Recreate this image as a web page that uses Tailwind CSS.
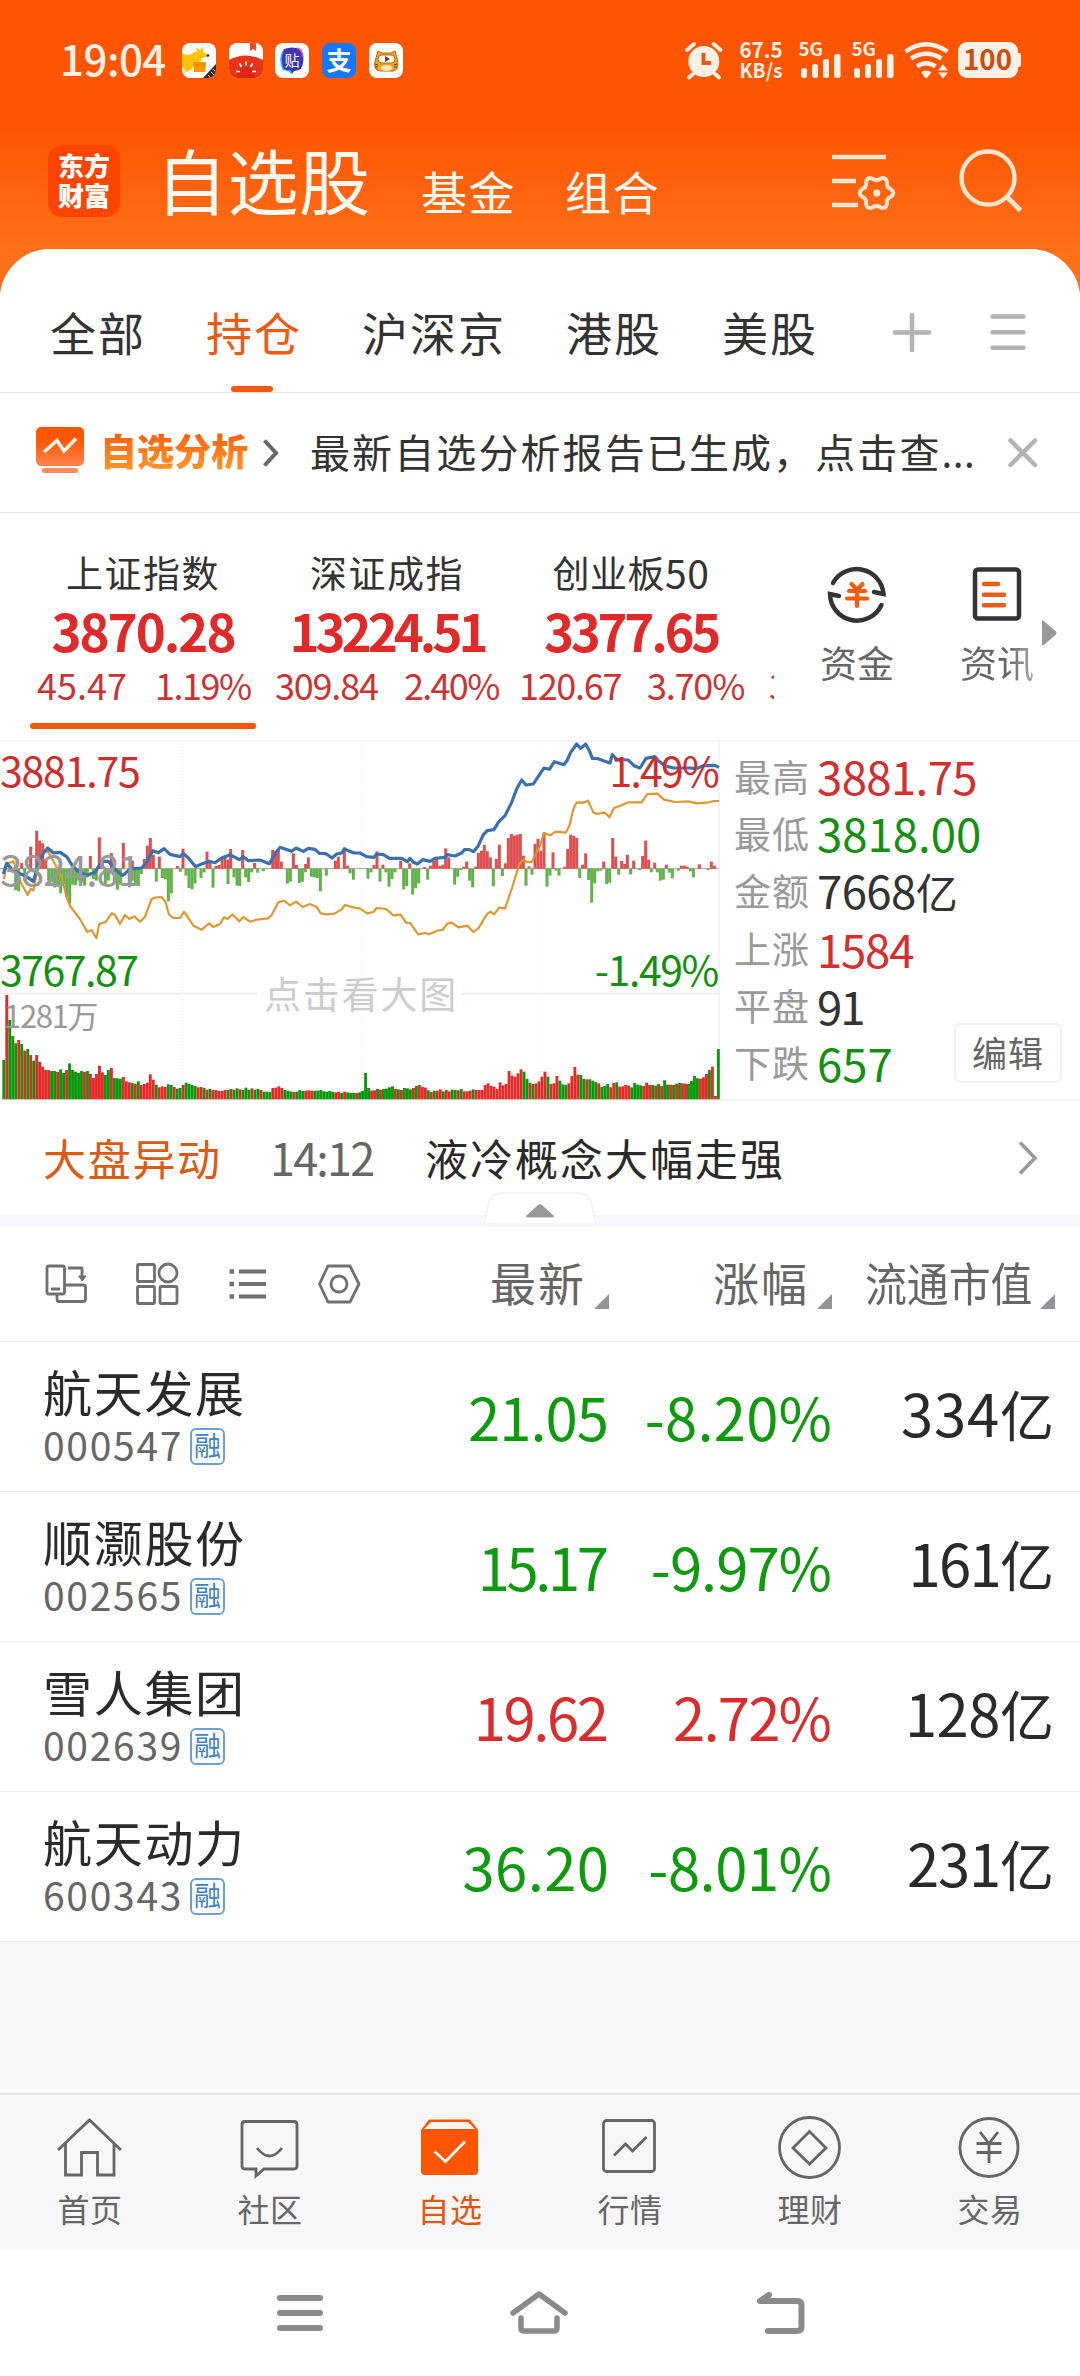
<!DOCTYPE html>
<html lang="zh-CN">
<head>
<meta charset="utf-8">
<title>自选股</title>
<script src="https://cdn.jsdelivr.net/npm/@tailwindcss/browser@4"></script>
</head>
<body class="w-[1080px] h-[2376px] overflow-hidden bg-white font-['Noto_Sans_CJK_SC',sans-serif] leading-none text-[#333] whitespace-nowrap">
<div class="flex flex-col w-[1080px] h-[2376px]">

<header class="h-[310px] shrink-0 bg-linear-to-b from-[#ff5500] from-[42%] to-[#ff7019] to-[82%]">
  <!-- status bar -->
  <div class="h-[120px] flex items-center pl-[60px] text-[#fff0e6]">
    <div class="w-[122px] h-[46px] text-[42px] leading-[42px] font-medium tracking-[-0.5px]">19:04</div>
    <div class="flex gap-[12.7px]">
      <svg width="34" height="35" viewBox="0 0 34 35"><clipPath id="a"><rect width="34" height="35" rx="8"/></clipPath><g clip-path="url(#a)"><rect width="34" height="35" fill="#fff"/><path d="M0 10Q6 14 11 10L15 8L14 4L18 7L21 4V9L27 12L25 14L20 15L18 20L13 21L9 27L3 29L1 34L3 27L0 24Z" fill="#ffc40c"/><path d="M11 19H24L23 29H12Z" fill="#ff9500"/><path d="M11 19L14 22H24" fill="none" stroke="#e87c00"/><circle cx="26" cy="12.5" r="1.3" fill="#222"/><path d="M34 21V35H21Z" fill="#3a2a20"/><path d="M26 32l2 2M29 29l3 3M31 26l2 2" stroke="#d6c2ae" stroke-width="1"/></g></svg>
      <svg width="34" height="35" viewBox="0 0 34 35"><clipPath id="b"><rect width="34" height="35" rx="8"/></clipPath><g clip-path="url(#b)"><rect width="34" height="35" fill="#fff"/><path d="M21 0H27V8L24 6L21 8Z" fill="#f04a23"/><path d="M0 17Q16 8 34 17V35H0Z" fill="#ea3319"/><circle cx="17" cy="32" r="9" fill="#d91e0a" opacity=".6"/><path d="M17 18.500V22.500M10.500 20.500L12.500 24M23.500 20.500L21.500 24M7 28.500H11M23 28.500H27" stroke="#fff" stroke-width="1.700"/></g></svg>
      <svg width="34" height="35" viewBox="0 0 34 35"><rect width="34" height="35" rx="8" fill="#fff"/><path d="M9 6Q17 3 26 6Q31 16 26 26Q21 28 19 28L17 31L15 28Q11 28 8 26Q3 16 9 6Z" fill="#3f35b8"/><path d="M8 8Q4 16 8 26Q11 28 15 28L17 31" stroke="#2abff5" stroke-width="1.500" fill="none"/><path d="M22 5Q27 6 28 14" stroke="#ff5d93" stroke-width="1.500" fill="none"/><text x="17" y="22.500" font-size="15" text-anchor="middle" fill="#fff">贴</text></svg>
      <svg width="34" height="35" viewBox="0 0 34 35"><rect width="34" height="35" rx="8" fill="#1677ff"/><text x="17" y="27" font-size="25" font-weight="700" text-anchor="middle" fill="#fff">支</text></svg>
      <svg width="34" height="35" viewBox="0 0 34 35"><rect width="34" height="35" rx="8" fill="#fff"/><path d="M9 8L13 10H22L26 8L28 15Q31 27 24 28H11Q3 27 7 15Z" fill="#f6a31c" stroke="#b66a10"/><rect x="9" y="12" width="17" height="8" rx="4" fill="#fff" stroke="#b66a10"/><path d="M16 13L21 16L16 19Z" fill="#8d2f20"/><path d="M6 21l3 1M6 24l3 0M28 21l-3 1M28 24l-3 0" stroke="#6b3410"/><ellipse cx="17.500" cy="25" rx="6" ry="3" fill="#ffe5b0"/></svg>
    </div>
    <svg class="ml-[281px]" width="340" height="60" viewBox="683 30 340 60" fill="#fff0e6">
      <circle cx="702.800" cy="61.500" r="15.500"/><path d="M686 50L693 44M719.500 50L712.500 44M692 74L688 77.500M714 74L718 77.500" stroke="#fff0e6" stroke-width="4" stroke-linecap="round"/><path d="M702.500 53V63H710" fill="none" stroke="#e55a1c" stroke-width="4"/>
      <text x="738.500" y="58" font-size="21.500" font-weight="700" textLength="43" lengthAdjust="spacingAndGlyphs">67.5</text>
      <text x="738.500" y="77.500" font-size="19.500" font-weight="700" textLength="43" lengthAdjust="spacingAndGlyphs">KB/s</text>
      <g id="sig"><text x="797.500" y="56" font-size="18" font-weight="700" textLength="24.500" lengthAdjust="spacingAndGlyphs">5G</text><rect x="800" y="68" width="6" height="10" rx="2.500"/><rect x="811" y="64" width="6" height="14" rx="2.500"/><rect x="822" y="59" width="6" height="19" rx="2.500"/><rect x="833" y="54" width="6.500" height="24" rx="2.500"/></g>
      <use href="#sig" x="53"/>
      <g fill="none" stroke="#fff0e6" stroke-width="4.500"><path d="M904.500 51.500Q925 37 946.500 51.500"/><path d="M910 58.500Q925 49 940.500 58.500"/><path d="M916 66.500Q925 60 934.500 66.500"/></g>
      <path d="M920 72Q925 69 930.500 72L926.500 77.500Q925 79 923.500 77.500ZM937 70.500L942 64L947 70.500ZM937 72.500L942 78.500L947 72.500Z"/>
      <rect x="957" y="42" width="60" height="36" rx="9"/><rect x="1014" y="53" width="6" height="14" rx="2"/>
      <text x="962" y="70" font-size="28" font-weight="700" fill="#c94e12" textLength="49" lengthAdjust="spacingAndGlyphs">100</text>
    </svg>
  </div>
  <!-- title bar -->
  <div class="h-[125px] flex items-start pl-12 text-[#fff8f0]">
    <div class="mt-[25px] w-[72px] h-[72px] rounded-[14px] bg-[#ff4400] flex flex-col items-center pt-[5px] text-[26px] leading-[30px] font-black text-white"><span>东方</span><span>财富</span></div>
    <div class="ml-[36px] mt-[23px] w-[265px] text-[71px] leading-[70px] tracking-[0.5px]">自选股</div>
    <div class="mt-[47px] w-[144px] text-[46px] leading-[46px] tracking-[1.5px]">基金</div>
    <div class="mt-[47px] w-[265px] text-[46px] leading-[46px] tracking-[1.5px]">组合</div>
    <svg class="mt-[31px]" width="66" height="64" viewBox="829 151 66 64" fill="none" stroke="#ffe5cf" stroke-width="4.500"><path d="M831 157H885M831 181H855M831 205H857"/><path transform="translate(875.500 193)" d="M14.200 -3.800Q19.500 0 14.200 3.800Q10 5.750 10.400 10.400Q9.750 16.900 3.800 14.200Q0 11.500 -3.800 14.200Q-9.750 16.900 -10.400 10.400Q-10 5.750 -14.200 3.800Q-19.500 0 -14.200 -3.800Q-10 -5.750 -10.400 -10.400Q-9.750 -16.900 -3.800 -14.200Q0 -11.500 3.800 -14.200Q9.750 -16.900 10.400 -10.400Q10 -5.750 14.200 -3.800Z" stroke-width="4"/><circle cx="875.700" cy="193" r="3.700" fill="#ffe5cf" stroke="none"/></svg>
    <svg class="ml-[61px] mt-[27px]" width="68" height="68" viewBox="956 147 68 68" fill="none" stroke="#ffe5cf" stroke-width="4.500"><circle cx="987" cy="178" r="26.500"/><path d="M1006 197L1019.500 210.500" stroke-width="5"/></svg>
  </div>
</header>

<main class="relative -mt-[61px] shrink-0 h-[1844px] bg-[#f7f8fa] rounded-t-[50px]">
  <section class="bg-white rounded-t-[50px]">
    <!-- group tabs -->
    <div class="h-[144px] border-b border-[#e3e3e3] flex pl-[50px] pt-[59px] text-[46px] leading-[46px] tracking-[2px]">
      <div class="w-[156px]">全部</div>
      <div class="w-[156px] relative text-[#ee5a12]">持仓<div class="absolute left-[25px] top-[78px] w-[42px] h-[6px] rounded-full bg-[#f5590e]"></div></div>
      <div class="w-[204px]">沪深京</div>
      <div class="w-[156px]">港股</div>
      <div class="w-[168px]">美股</div>
      <svg class="mt-[3px]" width="144" height="44" viewBox="890 311 144 44" stroke="#b3b3b3" stroke-width="4.500" stroke-linecap="round"><path d="M895 332.500H929M912 315V350M992.500 316.500H1023.500M992.500 332.200H1023.500M992.500 347.800H1023.500"/></svg>
    </div>
    <!-- analysis notice -->
    <div class="h-[120px] border-b border-[#e3e3e3] flex items-center pl-9">
      <svg class="-mt-[5px]" width="48" height="47" viewBox="36 427 48 47"><defs><linearGradient id="g" x2="0" y2="1"><stop offset=".3" stop-color="#ff5500"/><stop offset="1" stop-color="#ff8350"/></linearGradient></defs><rect x="36" y="427" width="48" height="39" rx="5" fill="url(#g)"/><rect x="42" y="468" width="36" height="5" rx="2.500" fill="#f98c5c"/><path d="M44 452L57 440.500L64 451L76 438.500" fill="none" stroke="#fff3e8" stroke-width="3.500"/></svg>
      <div class="ml-[16px] w-[162px] h-[42px] text-[37px] leading-[37px] font-black bg-linear-to-b from-[#ff5c08] to-[#ff9a2a] bg-clip-text text-transparent">自选分析</div>
      <svg width="18" height="30" viewBox="262 438 18 30" fill="none" stroke="#666" stroke-width="4"><path d="M264.500 440.500L276 453L264.500 465.500"/></svg>
      <div class="ml-[30px] w-[698px] h-[44px] text-[40px] leading-[40px] tracking-[2.100px]">最新自选分析报告已生成，点击查<span class="font-['Noto_Sans'] tracking-[0.500px]">...</span></div>
      <svg width="30" height="30" viewBox="1009 439 30 30" stroke="#b3b3b3" stroke-width="4.500" stroke-linecap="round"><path d="M1011.500 441.500L1036 466M1036 441.500L1011.500 466"/></svg>
    </div>
    <!-- indices -->
    <div class="h-[229px] border-b-2 border-[#f4f4f4] flex">
      <div class="w-[774px] flex overflow-hidden">
        <div class="ml-[30px] w-[226px] shrink-0 flex flex-col items-center">
          <div class="mt-[41px] text-[37px] leading-[37px] tracking-[1.500px]">上证指数</div>
          <div class="mt-[14px] text-[51px] leading-[51px] font-bold tracking-[-2px] text-[#e02a2a]">3870.28</div>
          <div class="mt-[10px] w-full h-[38px] flex pl-[7px] text-[36px] leading-[36px] text-[#cc3232]"><span class="w-[118px]">45.47</span><span class="tracking-[-1.500px]">1.19%</span></div>
          <div class="mt-[19px] w-[226px] h-[6px] rounded-full bg-[#f2590f]"></div>
        </div>
        <div class="w-[244px] ml-[9px] shrink-0 flex flex-col items-center">
          <div class="mt-[41px] text-[37px] leading-[37px] tracking-[1.500px]">深证成指</div>
          <div class="mt-[14px] text-[51px] leading-[51px] font-bold tracking-[-4px] text-[#e02a2a]">13224.51</div>
          <div class="mt-[10px] w-full flex pl-[10px] text-[36px] leading-[36px] text-[#cc3232]"><span class="w-[129px] tracking-[-1.200px]">309.84</span><span class="tracking-[-1.700px]">2.40%</span></div>
        </div>
        <div class="w-[244px] shrink-0 flex flex-col items-center">
          <div class="mt-[41px] flex items-start text-[37px] leading-[37px] tracking-[0.500px]">创业板<span class="text-[39px]">50</span></div>
          <div class="mt-[14px] text-[51px] leading-[51px] font-bold tracking-[-3.300px] text-[#e02a2a]">3377.65</div>
          <div class="mt-[10px] w-full flex pl-[10px] text-[36px] leading-[36px] text-[#cc3232]"><span class="w-[128px] tracking-[-1.300px]">120.67</span><span class="tracking-[-1.200px]">3.70%</span></div>
        </div>
        <div class="w-[40px] shrink-0 ml-[16px] mt-[153px] text-[36px] leading-[36px] text-[#cc3232]">3</div>
      </div>
      <div class="ml-[45px] w-[76px] flex flex-col items-center text-[37px] leading-[37px] text-[#666]">
        <svg class="mt-[50px] mb-[19px]" width="60" height="62" viewBox="826 563 60 62" fill="none" stroke="#333" stroke-width="4.500" stroke-linecap="round"><path d="M832 583A27 27 0 0 1 882.500 594L873 592"/><path d="M880.500 605A27 27 0 0 1 829 594L838 596"/><path d="M850.500 584L856 590L861.500 584M856 591V606M848 591H864M846 598.500H866" stroke="#ff5a0a" stroke-width="4.200"/></svg>
        资金</div>
      <div class="ml-[64px] w-[76px] flex flex-col items-center text-[37px] leading-[37px] text-[#666]">
        <svg class="mt-[52px] mb-[19px]" width="52" height="60" viewBox="971 565 52 60" fill="none" stroke="#333" stroke-width="4.500" stroke-linecap="round"><rect x="975" y="569.500" width="44" height="49" rx="3"/><path d="M984 584H998M984 594.700H1004M984 605.300H1004" stroke="#ea5c14"/></svg>
        <span class="bg-linear-to-r from-[#666] from-[65%] to-[#aaa] bg-clip-text text-transparent">资讯</span></div>
      <svg class="ml-[7px] mt-[107px]" width="16" height="26" viewBox="0 0 16 26"><path d="M0 1Q1 0 3 2L14 11.500Q15 13 14 14.500L3 24Q1 26 0 25Z" fill="#999"/></svg>
    </div>
    <!-- intraday chart and statistics -->
    <div class="h-[359px] flex border-b-2 border-[#f4f4f4]">
      <div class="relative w-[720px] h-[358px] border-r-2 border-[#f4f4f4]">
        <svg class="absolute left-0 -top-px" width="720" height="359" viewBox="0 21 2160 1077">
          <path d="M549 30V1090M1086 30V1090M1623 30V1090" stroke="#ececec" stroke-width="3" stroke-dasharray="3 6"/>
          <path d="M0 779H772M1382 779H2160" stroke="#eeeeee" stroke-width="5"/>
          <path d="M0 404H2155" stroke="#8f8a7a" stroke-width="2.500"/>
          <g id="flow"></g><g id="vol"></g>
          <g fill="none" stroke-linejoin="round"><polyline id="orange" stroke="#e0962c" stroke-width="6.500"/><polyline id="blue" stroke="#3b70b0" stroke-width="9.500"/></g>
        </svg>
        <div class="absolute left-0 top-[7px] text-[41px] leading-[41px] tracking-[-1.200px] text-[#d02c2c]">3881.75</div>
        <div class="absolute left-0 top-[106px] text-[41px] leading-[41px] tracking-[-1.200px] text-[#999]">3824.81</div>
        <div class="absolute left-0 top-[206px] text-[41px] leading-[41px] tracking-[-1.500px] text-[#12900f]">3767.87</div>
        <div class="absolute left-[4px] top-[257px] text-[31px] leading-[31px] tracking-[-1.300px] text-[#999]">1281万</div>
        <div class="absolute right-0 top-[7px] text-[41px] leading-[41px] tracking-[-1.800px] text-[#d02c2c]">1.49%</div>
        <div class="absolute right-0 top-[206px] text-[41px] leading-[41px] tracking-[-1.400px] text-[#12900f]">-1.49%</div>
        <div class="absolute left-[264px] top-[233px] text-[37px] leading-[37px] tracking-[1.800px] text-[#ccc]">点击看大图</div>
      </div>
      <div class="w-[360px] flex pl-[14px] pt-[6px] text-[37px] tracking-[1px]">
        <div class="w-[83px] flex flex-col text-[#999] leading-[57.200px]"><span>最高</span><span>最低</span><span>金额</span><span>上涨</span><span>平盘</span><span>下跌</span></div>
        <div class="-mt-px w-[137px] flex flex-col text-[45.500px] leading-[57.200px] tracking-[-0.600px]"><span class="text-[#d42e2e]">3881.75</span><span class="text-[#12900f] tracking-[0px]">3818.00</span><span>7668<span class="text-[42px]">亿</span></span><span class="text-[#d42e2e] tracking-[-1.200px]">1584</span><span class="tracking-[-2px]">91</span><span class="text-[#12900f] tracking-[0px]">657</span></div>
        <div class="mt-[275px] w-[108px] h-[60px] rounded-[7px] border-2 border-[#f0f0f0] flex justify-center pt-[9px] text-[35px] leading-[36px] text-[#666]">编辑</div>
      </div>
    </div>
    <!-- market alert -->
    <div class="h-[114px] flex pl-[43px] pt-[33px] text-[43px] leading-[46px]">
      <div class="w-[227px] tracking-[1.700px] text-[#dc5a14]">大盘异动</div>
      <div class="w-[155px] text-[45px] tracking-[-1.800px] text-[#666]">14:12</div>
      <div class="w-[592px] tracking-[2px] text-[#2a2a2a]">液冷概念大幅走强</div>
      <svg class="mt-[6px]" width="22" height="36" viewBox="1016 1140 22 36" fill="none" stroke="#999" stroke-width="3.500"><path d="M1019 1142.500L1034 1158L1019 1173.500"/></svg>
    </div>
    <div class="relative h-[12px] bg-[#f5f7fa]">
      <svg class="absolute left-[483px] -top-[23px]" width="114" height="34" viewBox="483 1192 114 34"><path d="M484.500 1224L488 1206Q490 1193 503 1193H577Q590 1193 592 1206L595.500 1224Z" fill="#fff" stroke="#f1f2f4" stroke-width="1.500"/><path d="M526 1216L538 1205Q540 1203.500 542 1205L554 1216Q554 1217.500 552 1217.500H528Q526 1217.500 526 1216Z" fill="#999"/></svg>
    </div>
    <!-- table header -->
    <div class="h-[115px] border-b border-[#ebebeb] flex pl-[43px] text-[#666]">
      <svg class="mt-[33px] w-[320px] shrink-0" height="48" viewBox="43 1260 320 48" fill="none" stroke="#707070" stroke-width="2.800" stroke-linejoin="round">
        <rect x="47" y="1266" width="17.500" height="28" rx="2"/><path d="M51 1289H60M68 1268H82V1277M65 1285H83Q85.500 1285 85.500 1287V1299Q85.500 1301.500 83 1301.500H59Q57 1301.500 57 1299V1295"/><path d="M78.500 1276H86L82.300 1281Z" fill="#707070" stroke-width="1"/>
        <rect x="137.500" y="1264.500" width="17" height="17" rx="1"/><circle cx="168" cy="1273" r="9"/><rect x="137.500" y="1286.500" width="17" height="17" rx="1"/><rect x="160" y="1286.500" width="17" height="17" rx="1"/>
        <path d="M239 1271.500H266M239 1284H266M239 1296.500H266" stroke-width="4"/><path d="M229.500 1271.500H234M229.500 1284H234M229.500 1296.500H234" stroke-width="4.500"/>
        <path d="M328 1266H350L359 1284L350 1302H328L319.500 1284Z"/><circle cx="339" cy="1284" r="8"/>
      </svg>
      <div class="w-[248px] pt-[31px] pr-[2px] flex justify-end text-[46px] leading-[46px] tracking-[2px]">最新<svg class="mt-[36px] ml-[8px]" width="15" height="15"><path d="M15 0V15H0Z" fill="#929297"/></svg></div>
      <div class="w-[223px] pt-[31px] pr-[2px] flex justify-end text-[46px] leading-[46px] tracking-[2px]">涨幅<svg class="mt-[36px] ml-[8px]" width="15" height="15"><path d="M15 0V15H0Z" fill="#929297"/></svg></div>
      <div class="w-[223px] pt-[31px] pr-[2px] flex justify-end text-[46px] leading-[46px]"><span class="w-[168px]"><span class="inline-block origin-left scale-x-91">流通市值</span></span><svg class="mt-[36px] ml-[7px]" width="15" height="15"><path d="M15 0V15H0Z" fill="#929297"/></svg></div>
    </div>
    <!-- holdings -->
    <div id="rows"></div>
  </section>
</main>

<!-- app tabs -->
<nav class="h-[157px] shrink-0 bg-[#f7f7fa] border-t-2 border-[#e2e2e4] grid grid-cols-6 justify-items-center pt-[18px] text-[32px] leading-[32px] tracking-[0.500px] text-[#666]">
  <div class="flex flex-col items-center gap-[11px]"><svg width="70" height="68" viewBox="55 2113 70 68" fill="none" stroke="#666" stroke-width="2.800"><path d="M58 2150L89.500 2120L121 2150M65.500 2143V2175H81.500V2152.500H97.500V2175H114V2143"/></svg>首页</div>
  <div class="flex flex-col items-center gap-[11px]"><svg width="70" height="68" viewBox="235 2113 70 68" fill="none" stroke="#666" stroke-width="2.800"><path d="M245 2121.500H294Q297 2121.500 297 2124.500V2166Q297 2169 294 2169H264L256 2176V2169H245Q242 2169 242 2166V2124.500Q242 2121.500 245 2121.500Z"/><path d="M257 2148Q269.500 2164 282 2148"/></svg>社区</div>
  <div class="flex flex-col items-center gap-[11px] text-[#e55410]"><svg width="70" height="68" viewBox="415 2113 70 68"><path d="M421 2130L429 2119.500H470L478 2130V2171Q478 2175 474 2175H425Q421 2175 421 2171Z" fill="#ff5500"/><path d="M424 2129L431 2122H468L475 2129Z" fill="#fff4ec"/><path d="M434.500 2151.500L445.500 2161.500L465 2141.500" fill="none" stroke="#fff" stroke-width="2.800"/></svg>自选</div>
  <div class="flex flex-col items-center gap-[11px]"><svg width="70" height="68" viewBox="595 2113 70 68" fill="none" stroke="#666" stroke-width="2.800"><rect x="603.500" y="2120.500" width="51" height="51" rx="3"/><path d="M614 2155.500L625.500 2144L632.500 2151L646.500 2137"/></svg>行情</div>
  <div class="flex flex-col items-center gap-[11px]"><svg width="70" height="68" viewBox="775 2113 70 68" fill="none" stroke="#666" stroke-width="2.800"><circle cx="809.500" cy="2147.500" r="30"/><path d="M809.500 2131.500L826 2148L809.500 2164L793 2148Z"/></svg>理财</div>
  <div class="flex flex-col items-center gap-[11px]"><svg width="70" height="68" viewBox="955 2113 70 68" fill="none" stroke="#666" stroke-width="2.800"><circle cx="989" cy="2147.500" r="29"/><path d="M980 2132L989 2143.500L998 2132M989 2143V2163M976.500 2143.500H1001.500M976.500 2152.500H1001.500"/></svg>交易</div>
</nav>
<!-- system navigation -->
<footer class="h-[126px] shrink-0 bg-white flex justify-between pl-[277px] pr-[275px] pt-[38px]">
  <svg class="my-[5px]" width="46" height="40" viewBox="277 2293 46 40" stroke="#8a8a8a" stroke-width="6" stroke-linecap="round"><path d="M280 2298H320M280 2313H320M280 2328H320"/></svg>
  <svg width="60" height="50" viewBox="510 2288 60 50" fill="none" stroke="#8a8a8a" stroke-width="5.500" stroke-linecap="round" stroke-linejoin="round"><path d="M514 2313L540 2294L566 2313M522 2318V2328Q522 2331 525 2331H555Q558 2331 558 2328V2318"/></svg>
  <svg width="50" height="50" viewBox="755 2288 50 50" fill="none" stroke="#8a8a8a" stroke-width="6" stroke-linecap="round" stroke-linejoin="round"><path d="M769 2295L760 2301H797Q801.500 2301 801.500 2305V2327Q801.500 2331 797 2331H768"/></svg>
</footer>
</div>

<script>
const stocks = [
  ['航天发展','000547',['21.05',-1],['-8.20%',0.2],['334',0.8]],
  ['顺灏股份','002565',['15.17',-3.4],['-9.97%',-1],['161',-1.7]],
  ['雪人集团','002639',['19.62',-2.4],['2.72%',-1.8],['128',-0.5]],
  ['航天动力','600343',['36.20',0.4],['-8.01%',-0.5],['231',-1.2]],
];
// Keeps the last glyph on the column's right edge whatever the spacing is
const fit = t => `letter-spacing:${t}px;margin-right:${-t - 1}px`;
document.getElementById('rows').innerHTML = stocks.map(([name, code, price, pct, cap]) => {
  const color = pct[0].startsWith('-') ? 'text-[#0d9a0d]' : 'text-[#d92d2d]';
  return `<div class="h-[150px] border-b border-[#ebebeb] flex pl-[43px]">
    <div class="w-[320px] pt-[24px]">
      <div class="text-[49px] leading-[49px] tracking-[1.700px] text-[#2a2a2a]">${name}</div>
      <div class="mt-[13px] flex text-[39px] text-[#666]"><span class="w-[147px] -mt-[3px] leading-[39px] tracking-[1.700px]">${code}</span><span class="w-[35px] h-[37px] rounded-[6px] border-2 border-[#6d9fd0] text-[27px] leading-[29px] text-[#3f7fc4] flex justify-center">融</span></div>
    </div>
    <div class="w-[245px] pt-[45px] text-right text-[58px] leading-[58px] ${color}"><span style="${fit(price[1])}">${price[0]}</span></div>
    <div class="w-[223px] pt-[45px] text-right text-[58px] leading-[58px] ${color}"><span style="${fit(pct[1])}">${pct[0]}</span></div>
    <div class="w-[223px] pt-[41px] text-right text-[58px] leading-[58px] text-[#2a2a2a]"><span style="letter-spacing:${cap[1]}px">${cap[0]}</span><span class="text-[54px]">亿</span></div>
  </div>`;
}).join('');

// Price lines, 3 chart units per pixel
const blue = '10,420 20,388 35,405 50,415 75,425 100,442 115,390 130,358 143,342 160,357 180,355 200,368 215,392 235,412 262,424 285,415 305,382 325,382 350,410 368,425 390,405 425,402 440,385 458,350 475,356 492,344 510,361 540,368 550,358 565,372 587,398 605,390 628,382 645,386 665,372 690,362 705,370 718,377 730,368 745,380 780,378 808,389 825,360 840,340 875,352 888,342 910,352 925,343 945,346 958,358 978,359 996,372 1010,360 1025,357 1033,345 1062,357 1080,357 1100,368 1122,370 1130,360 1150,362 1168,373 1205,373 1222,383 1230,373 1240,385 1252,390 1268,377 1290,382 1305,373 1335,370 1342,362 1365,366 1385,357 1393,347 1408,347 1420,353 1435,335 1450,302 1462,290 1482,287 1495,265 1515,245 1535,205 1550,165 1565,138 1578,153 1600,150 1615,127 1632,102 1648,106 1663,83 1692,92 1702,78 1712,55 1730,30 1742,43 1757,30 1768,50 1777,73 1795,74 1810,80 1830,87 1837,62 1850,76 1885,78 1902,95 1920,102 1938,73 1965,68 1975,80 1995,95 2020,102 2070,102 2090,104 2110,95 2145,94 2157,100';
const orange = '12,435 20,390 40,382 50,405 62,445 83,483 92,464 100,470 110,420 130,355 143,352 165,390 185,430 200,490 210,516 240,555 262,594 275,588 289,612 298,570 318,563 335,538 345,543 360,570 375,543 388,555 403,547 420,563 435,548 455,495 465,491 485,489 497,505 507,542 520,552 540,552 552,533 580,575 605,587 628,568 640,579 660,570 672,550 683,555 697,541 718,562 730,549 750,563 770,557 805,553 815,543 835,505 852,500 870,514 888,503 908,519 930,510 950,519 962,538 980,541 1003,539 1025,526 1035,513 1060,520 1080,524 1102,538 1120,534 1130,522 1158,525 1180,544 1202,542 1218,566 1230,567 1255,601 1275,597 1287,601 1315,589 1328,588 1342,569 1355,566 1375,580 1402,575 1420,594 1435,583 1462,539 1472,533 1482,541 1498,521 1515,523 1535,465 1558,390 1570,377 1580,384 1595,384 1620,335 1632,297 1650,304 1667,293 1697,296 1708,275 1720,225 1730,205 1750,206 1764,200 1780,235 1792,240 1813,235 1828,250 1842,222 1865,214 1885,205 1925,205 1942,180 1972,179 1992,197 2025,204 2065,202 2090,208 2125,205 2142,201 2157,201';
document.getElementById('blue').setAttribute('points', blue);
document.getElementById('orange').setAttribute('points', orange);

// Momentum bars around the previous close (y = 404)
const flowA = '65:387 92:338 110:290 119:320 128:328 137:375 271:366 298:310 307:385 334:357 370:327 397:380 433:375 442:335 451:312 460:362 478:368 532:396 549:344 621:353 630:385 648:396 657:393 666:372 675:370 684:377 692:345 728:348 764:387 818:348 827:350 835:345 844:383 880:358 889:393 917:390 925:370 1006:380 1015:368 1033:340 1042:395 47:468 56:472 74:440 146:440 155:445 164:460 173:458 182:478 191:450 200:490 209:508 218:452 227:453 236:440 245:445 254:455 262:430 280:435 289:440 316:450 325:440 343:445 352:467 361:452 388:460 397:440 406:450 415:456 424:420 469:443 487:432 496:436 505:502 514:478 541:413 558:425 567:462 576:466 585:448 603:432 612:415 639:461 684:450 702:430 711:455 719:456 737:430 746:444 755:415 773:416 790:411 862:449 871:443 898:447 907:443 916:415 934:428 943:430 952:432 961:472 979:425 1050:418 1060:437';
const flowB = '42:393 51:352 69:392 122:380 149:388 194:399 212:395 221:380 230:372 239:396 248:392 257:343 266:370 311:398 320:383 347:398 355:357 364:350 373:333 382:352 391:370 409:375 418:332 436:388 445:312 454:300 463:305 472:302 481:300 490:365 507:397 525:330 534:315 543:350 552:295 579:355 614:398 623:345 632:302 641:306 650:312 668:392 677:358 731:383 758:312 767:368 785:381 794:390 802:362 821:380 848:366 857:320 866:377 884:386 919:392 964:395 973:395 982:398 1018:391 1054:383 1063:395 24:434 33:415 60:443 78:415 87:458 96:435 105:415 131:466 140:456 158:482 167:463 176:448 203:437 284:452 293:428 302:408 329:440 338:460 400:457 427:426 498:455 516:422 561:458 570:425 588:410 597:425 659:432 686:438 695:506 704:448 713:412 722:410 740:450 749:446 776:422 812:421 839:408 874:415 892:415 901:440 910:437 928:416 937:433 955:410 991:412 1000:430 1045:408';
const bars = (s, dx) => s.split(' ').map(p => {
  const [x, y] = p.split(':').map(Number);
  return `<rect x="${x + dx - 4.5}" y="${Math.min(y, 404)}" width="9" height="${Math.abs(y - 404)}" fill="${y < 404 ? '#df4f4f' : '#62b24b'}"/>`;
}).join('');
document.getElementById('flow').innerHTML = bars(flowA, 0) + bars(flowB, 1080);

// Per-minute volume: direction and bar top, baseline 1096
const vol = 'G978 R783 G858 G906 G928 R918 G930 R950 G945 R963 G980 R963 R984 R998 R1008 R1008 G1011 G1011 R1014 G1006 G1017 R1008 G988 G1008 G1013 G1017 G1011 R1014 G1011 R1020 R1032 R1020 R995 R1015 G1023 G1008 R1002 G1032 G1033 G1034 R1029 R1042 R1045 G1047 R1050 G1042 R1053 R1050 R1046 R1021 R1037 G1052 R1060 R1057 R1059 G1051 G1053 R1059 G1064 G1062 R1053 G1046 G1050 G1053 G1056 R1060 R1059 G1062 R1067 G1065 R1068 R1068 R1071 R1071 R1068 G1068 R1065 G1067 G1063 R1066 G1068 G1061 G1067 R1063 G1067 G1065 R1068 G1073 G1073 G1074 R1062 R1061 R1057 R1062 G1068 G1070 G1072 R1074 G1073 G1068 G1071 R1070 R1069 R1070 G1070 G1070 G1068 G1072 G1073 G1071 G1074 R1075 R1073 G1077 R1073 G1075 G1077 G1077 R1077 G1075 G1071 G1017 G1062 R1070 R1069 G1065 R1067 G1065 G1064 G1060 G1057 R1065 G1066 R1068 G1062 G1063 G1066 R1062 G1056 R1053 R1059 R1061 G1069 R1074 G1070 R1070 R1066 G1072 R1068 R1072 G1067 G1068 R1069 G1065 R1072 R1072 R1070 G1066 R1068 R1068 R1068 R1053 R1048 R1056 R1058 R1065 R1045 R1054 R1050 R1011 R1025 R1028 R1018 R1006 G1013 G1035 R1046 G1050 R1048 R1042 R1028 R1013 G1028 R1050 R1048 R1026 G1040 G1051 G1053 R1048 R1026 R999 R1022 G1023 G1035 R1036 G1036 G1040 G1044 R1048 G1059 G1056 G1050 R1060 R1047 G1045 R1058 R1057 R1053 R1055 G1060 G1047 G1052 G1054 R1056 R1046 R1053 G1053 R1055 G1050 R1056 G1039 G1052 R1052 G1053 R1049 G1047 R1048 R1049 G1050 G1041 G1026 G1033 R1034 R1030 R1020 G1008 R998 R1086 G945'.split(' ');
document.getElementById('vol').innerHTML = vol.map((v, i) => {
  const y = +v.slice(1);
  return `<rect x="${(7 + i * 8.97).toFixed(1)}" y="${y}" width="8.6" height="${1096 - y}" fill="${v[0] === 'R' ? '#e32a28' : '#0a980a'}"/>`;
}).join('');
</script>
</body>
</html>
